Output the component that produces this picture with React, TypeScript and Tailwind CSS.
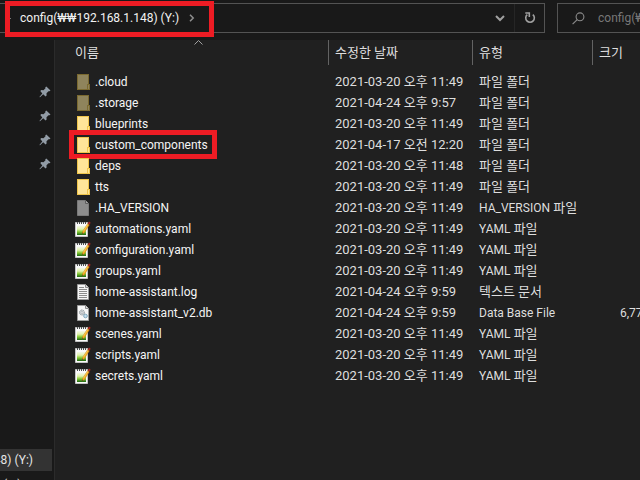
import React from "react";

type Kind = "hiddenFolder" | "folder" | "blank" | "yaml" | "log" | "db";

type Entry = {
  name: string;
  date: string;
  type: string;
  kind: Kind;
  size?: string;
  marked?: boolean;
};

const entries: Entry[] = [
  { name: ".cloud", date: "2021-03-20 오후 11:49", type: "파일 폴더", kind: "hiddenFolder" },
  { name: ".storage", date: "2021-04-24 오후 9:57", type: "파일 폴더", kind: "hiddenFolder" },
  { name: "blueprints", date: "2021-03-20 오후 11:49", type: "파일 폴더", kind: "folder" },
  { name: "custom_components", date: "2021-04-17 오전 12:20", type: "파일 폴더", kind: "folder", marked: true },
  { name: "deps", date: "2021-03-20 오후 11:48", type: "파일 폴더", kind: "folder" },
  { name: "tts", date: "2021-03-20 오후 11:49", type: "파일 폴더", kind: "folder" },
  { name: ".HA_VERSION", date: "2021-03-20 오후 11:49", type: "HA_VERSION 파일", kind: "blank" },
  { name: "automations.yaml", date: "2021-03-20 오후 11:49", type: "YAML 파일", kind: "yaml" },
  { name: "configuration.yaml", date: "2021-03-20 오후 11:49", type: "YAML 파일", kind: "yaml" },
  { name: "groups.yaml", date: "2021-03-20 오후 11:49", type: "YAML 파일", kind: "yaml" },
  { name: "home-assistant.log", date: "2021-04-24 오후 9:59", type: "텍스트 문서", kind: "log" },
  { name: "home-assistant_v2.db", date: "2021-04-24 오후 9:59", type: "Data Base File", kind: "db", size: "6,77" },
  { name: "scenes.yaml", date: "2021-03-20 오후 11:49", type: "YAML 파일", kind: "yaml" },
  { name: "scripts.yaml", date: "2021-03-20 오후 11:49", type: "YAML 파일", kind: "yaml" },
  { name: "secrets.yaml", date: "2021-03-20 오후 11:49", type: "YAML 파일", kind: "yaml" },
];

// Sets the Hangul runs, with the spaces round them, one size above the Latin text.
function Mixed({ text }: { text: string }) {
  return (
    <>
      {text.split(/(\s*[가-힣][가-힣\s]*)/).map((part, i) =>
        i % 2 ? (
          <span key={i} className="text-[13px] leading-4">{part}</span>
        ) : (
          part
        ),
      )}
    </>
  );
}

function FolderIcon({ dim }: { dim?: boolean }) {
  const fill = dim ? "#8f845c" : "#ffe599";
  const edge = dim ? "#7b6a30" : "#f0c54a";
  return (
    <svg width="16" height="16" viewBox="0 0 16 16" className="shrink-0" aria-hidden="true">
      <path d="M2 0h12v10h1v6H2z" fill={edge} />
      <path d="M3 1h10v9h-1v5H3z" fill={fill} />
      <path d="M13 11h1v4h-1z" fill={fill} />
    </svg>
  );
}

function PageIcon({ kind }: { kind: Kind }) {
  const blank = kind === "blank";
  return (
    <svg width="16" height="16" viewBox="0 0 16 16" className="shrink-0" aria-hidden="true">
      <path d="M2.500 .5h8l3 3v12h-11z" fill={blank ? "#8d8d8d" : "#f7f7f7"} stroke={blank ? "#7a7a7a" : "#9c9c9c"} />
      <path d="M10.500 .5v3h3" fill={blank ? "#a5a5a5" : "#dedede"} stroke={blank ? "#5e5e5e" : "#8e8e8e"} />
      {kind === "log" && (
        <path d="M4 3.500h5M4 5.500h8M4 7.500h8M4 9.500h8M4 11.500h8M4 13.500h8" stroke="#8c8c8c" />
      )}
      {kind === "db" && (
        <>
          <circle cx="7" cy="7.500" r="2.500" fill="#d5d9dc" stroke="#8d969c" strokeDasharray="1.500 .6" />
          <circle cx="7" cy="7.500" r="1" fill="#fff" stroke="#8d969c" strokeWidth=".6" />
          <circle cx="10.500" cy="11" r="1.800" fill="#c4deed" stroke="#7fa7bd" />
        </>
      )}
    </svg>
  );
}

function YamlIcon() {
  return (
    <svg width="16" height="16" viewBox="0 0 16 16" className="shrink-0" aria-hidden="true">
      <defs>
        <linearGradient id="sheet" x1="0" y1="0" x2="0" y2="1">
          <stop offset="0" stopColor="#f4f8e8" />
          <stop offset=".35" stopColor="#e1f2ae" />
          <stop offset=".65" stopColor="#86cb35" />
          <stop offset="1" stopColor="#1c6412" />
        </linearGradient>
      </defs>
      <path d="M.5 1.500h12v14H.5z" fill="#fafafa" stroke="#c4c4c4" />
      <path d="M2 5h9v9H2z" fill="url(#sheet)" />
      <path d="M2.500 1v2M4.500 1v2M6.500 1v2M8.500 1v2M10.500 1v2" stroke="#4d5050" />
      <path d="M7.300 13l.3-2.600L12.600 2.700l1.700 1.200-5 7.800z" fill="#f6ab20" stroke="#b87818" strokeWidth=".4" />
      <path d="M8.500 10.200l4.600-7" stroke="#ffe074" strokeWidth=".6" />
      <path d="M12.700 2.500L14 .6 15.700 1.800l-1.300 2z" fill="#a82820" />
      <path d="M7.300 13l.2-1.500 1 .7z" fill="#332b20" />
    </svg>
  );
}

function EntryIcon({ kind }: { kind: Kind }) {
  if (kind === "folder") return <FolderIcon />;
  if (kind === "hiddenFolder") return <FolderIcon dim />;
  if (kind === "yaml") return <YamlIcon />;
  return <PageIcon kind={kind} />;
}

function PinIcon() {
  return (
    <svg width="12" height="12" viewBox="0 0 12 12" aria-hidden="true">
      <path d="M7.300 .5l4.200 4-1 .8-1-.1-2 2.100.1 2.200-1 1L4.200 8.200 1 11.300l-.6-.4 2.900-3.500L1.300 5l1-1 2.200.3 2-2.100-.2-.9z" fill="#929ca6" />
    </svg>
  );
}

function AddressBar() {
  return (
    <header className="flex h-10 shrink-0 items-start gap-3 bg-[#191919] pt-[3px]">
      <div className="flex h-[30px] min-w-0 grow items-center border border-l-0 border-[#535353]">
        <nav aria-label="경로" className="flex grow items-center">
          <span className="ml-[9px] mr-[9px] h-px w-[2px] bg-[#777777]" />
          <a href="#config" className="whitespace-nowrap text-[#f2f2f2]">
            config(<span className="text-[13px] leading-4">₩₩</span>192.168.1.148) (Y:)
          </a>
          <svg width="6" height="8" viewBox="0 0 6 8" className="ml-[10px]" aria-hidden="true">
            <path d="M1 .8l3.200 3.200L1 7.200" fill="none" stroke="#8f8f8f" strokeWidth="1.500" />
          </svg>
        </nav>
        <button aria-label="이전 위치" className="flex h-full w-7 items-center justify-center">
          <svg width="10" height="7" viewBox="0 0 10 7" aria-hidden="true">
            <path d="M1 1l4 4 4-4" fill="none" stroke="#a0a0a0" strokeWidth="2" />
          </svg>
        </button>
        <button aria-label="새로 고침" className="flex h-full w-[30px] items-center justify-center border-l border-[#262626]">
          <svg width="12" height="12" viewBox="0 0 12 12" aria-hidden="true">
            <path d="M8.800 2.600A4.300 4.300 0 1 1 3.300 2.600" fill="none" stroke="#a0a0a0" strokeWidth="1.600" />
            <path d="M1.300 1h4v4" fill="none" stroke="#a0a0a0" strokeWidth="1.600" />
          </svg>
        </button>
      </div>
      <label className="flex h-[30px] w-[83px] shrink-0 items-center overflow-hidden border border-r-0 border-[#535353] pl-[14px]">
        <svg width="13" height="13" viewBox="0 0 13 13" className="shrink-0" aria-hidden="true">
          <circle cx="8" cy="4.800" r="3.900" fill="none" stroke="#8a8a8a" strokeWidth="1.100" />
          <path d="M5.200 7.600L.6 12.200" stroke="#8a8a8a" strokeWidth="1.200" />
        </svg>
        <input
          aria-label="검색"
          placeholder="config(₩"
          className="ml-[13px] w-16 shrink-0 bg-transparent outline-none placeholder:text-[#777777]"
        />
      </label>
    </header>
  );
}

function Sidebar() {
  return (
    <aside className="flex w-[54px] shrink-0 flex-col overflow-hidden bg-[#191919] pt-10">
      {[0, 1, 2, 3].map((n) => (
        <div key={n} className="flex h-6 items-center justify-end pr-[3px]">
          <PinIcon />
        </div>
      ))}
      <div className="mr-[2px] mt-auto flex h-[22px] shrink-0 items-center justify-end whitespace-nowrap bg-[#333333] pr-[19px] text-[#e6e6e6]">
        48) (Y:)
      </div>
      <div className="h-[9px] shrink-0 overflow-hidden pl-[3px] leading-7 text-[#e6e6e6]">(Z:)</div>
    </aside>
  );
}

export default function App() {
  return (
    <div className="flex h-screen flex-col overflow-hidden bg-[#202020] font-['Roboto','Noto_Sans_CJK_KR',sans-serif] text-[12px] leading-4">
      <div className="relative">
        <AddressBar />
        <div className="pointer-events-none absolute left-[5px] top-px h-9 w-[209px] border-[5px] border-[#ed1c24]" />
      </div>
      <div className="flex min-h-0 grow">
        <Sidebar />
        <main className="min-w-0 grow overflow-hidden border-l border-[#2b2b2b]">
          <table className="w-full table-fixed border-separate border-spacing-0 whitespace-nowrap text-left text-[#dedede]">
            <colgroup>
              <col />
              <col className="w-36" />
              <col className="w-[120px]" />
              <col className="w-12" />
            </colgroup>
            <thead>
              <tr className="h-[25px] text-[13px]">
                <th className="relative p-0 pl-5 font-normal leading-4">
                  이름
                  <svg width="9" height="5" viewBox="0 0 9 5" className="absolute left-[139px] top-0" aria-hidden="true">
                    <path d="M.5 4.500l4-4 4 4" fill="none" stroke="#a0a0a0" />
                  </svg>
                </th>
                <th className="border-l border-[#636363] p-0 pl-[6px] font-normal leading-4">수정한 날짜</th>
                <th className="border-l border-[#636363] p-0 pl-[6px] font-normal leading-4">유형</th>
                <th className="border-l border-[#636363] p-0 pl-[6px] font-normal leading-4">크기</th>
              </tr>
            </thead>
            <tbody>
              <tr className="h-[6px]" aria-hidden="true">
                <td colSpan={4} className="p-0" />
              </tr>
              {entries.map((e) => (
                <tr key={e.name} className="h-[21px]">
                  <td className="relative p-0 pl-5">
                    <div className="flex items-center gap-1 text-[#f5f5f5]">
                      <EntryIcon kind={e.kind} />
                      {e.name}
                    </div>
                    {e.marked && (
                      <div className="pointer-events-none absolute -top-1 left-[14px] h-[29px] w-[148px] border-[5px] border-[#ed1c24]" />
                    )}
                  </td>
                  <td className="p-0 pl-[7px] text-[13px] leading-4">{e.date}</td>
                  <td className="p-0 pl-[7px]">
                    <Mixed text={e.type} />
                  </td>
                  <td className="p-0 pl-7">{e.size}</td>
                </tr>
              ))}
            </tbody>
          </table>
        </main>
      </div>
    </div>
  );
}
